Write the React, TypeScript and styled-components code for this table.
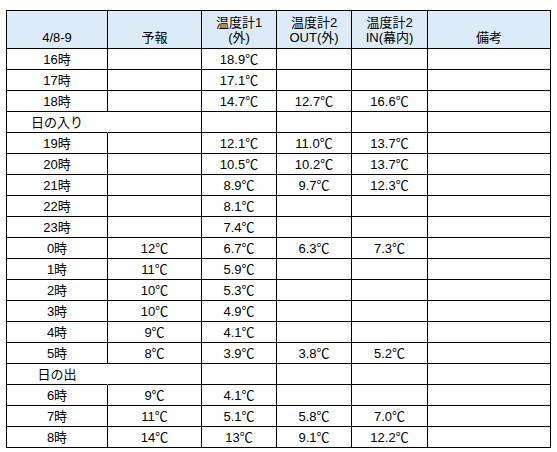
import styled, { createGlobalStyle } from "styled-components";

const GlobalStyle = createGlobalStyle`
  html, body {
    margin: 0;
    padding: 0;
    background: #ffffff;
  }
  body {
    font-family: "Liberation Sans", "Noto Sans CJK JP", sans-serif;
    font-size: 13px;
    color: #000;
  }
`;

const Sheet = styled.div`
  display: grid;
  grid-template-columns: 101px 94px 75px 75px 76px 123px;
  grid-template-rows: 38px;
  grid-auto-rows: 21px;
  width: 545px;
  margin: 10px 0 0 6px;
  border-left: 1px solid #000;
  border-top: 1px solid #000;
  box-sizing: border-box;
`;

const Cell = styled.div<{ $split?: boolean }>`
  box-sizing: border-box;
  display: flex;
  align-items: center;
  justify-content: center;
  padding-top: 1px;
  border-right: 1px solid ${(p) => (p.$split === false ? "transparent" : "#000")};
  border-bottom: 1px solid #000;
  white-space: nowrap;
  line-height: 15px;
`;

const HeadCell = styled(Cell)`
  flex-direction: column;
  justify-content: flex-end;
  padding: 0 0 3px;
  background: #dcebf7;
  text-align: center;
`;

const headers = [
  ["4/8-9"],
  ["予報"],
  ["温度計1", "(外)"],
  ["温度計2", "OUT(外)"],
  ["温度計2", "IN(幕内)"],
  ["備考"],
];

const rows: string[][] = [
  ["16時", "", "18.9℃"],
  ["17時", "", "17.1℃"],
  ["18時", "", "14.7℃", "12.7℃", "16.6℃"],
  ["日の入り"],
  ["19時", "", "12.1℃", "11.0℃", "13.7℃"],
  ["20時", "", "10.5℃", "10.2℃", "13.7℃"],
  ["21時", "", "8.9℃", "9.7℃", "12.3℃"],
  ["22時", "", "8.1℃"],
  ["23時", "", "7.4℃"],
  ["0時", "12℃", "6.7℃", "6.3℃", "7.3℃"],
  ["1時", "11℃", "5.9℃"],
  ["2時", "10℃", "5.3℃"],
  ["3時", "10℃", "4.9℃"],
  ["4時", "9℃", "4.1℃"],
  ["5時", "8℃", "3.9℃", "3.8℃", "5.2℃"],
  ["日の出"],
  ["6時", "9℃", "4.1℃"],
  ["7時", "11℃", "5.1℃", "5.8℃", "7.0℃"],
  ["8時", "14℃", "13℃", "9.1℃", "12.2℃"],
];

export default function App() {
  return (
    <>
      <GlobalStyle />
      <Sheet>
        {headers.map((lines, i) => (
          <HeadCell key={"h" + i}>
            {lines.map((l) => (
              <span key={l}>{l}</span>
            ))}
          </HeadCell>
        ))}
        {rows.map((row, r) => {
          // 日の入り / 日の出 rows have no line after the first column
          const label = !row[0].endsWith("時");
          return [0, 1, 2, 3, 4, 5].map((c) => (
            <Cell key={r + "-" + c} $split={!(label && c === 0)}>
              {row[c] || ""}
            </Cell>
          ));
        })}
      </Sheet>
    </>
  );
}
